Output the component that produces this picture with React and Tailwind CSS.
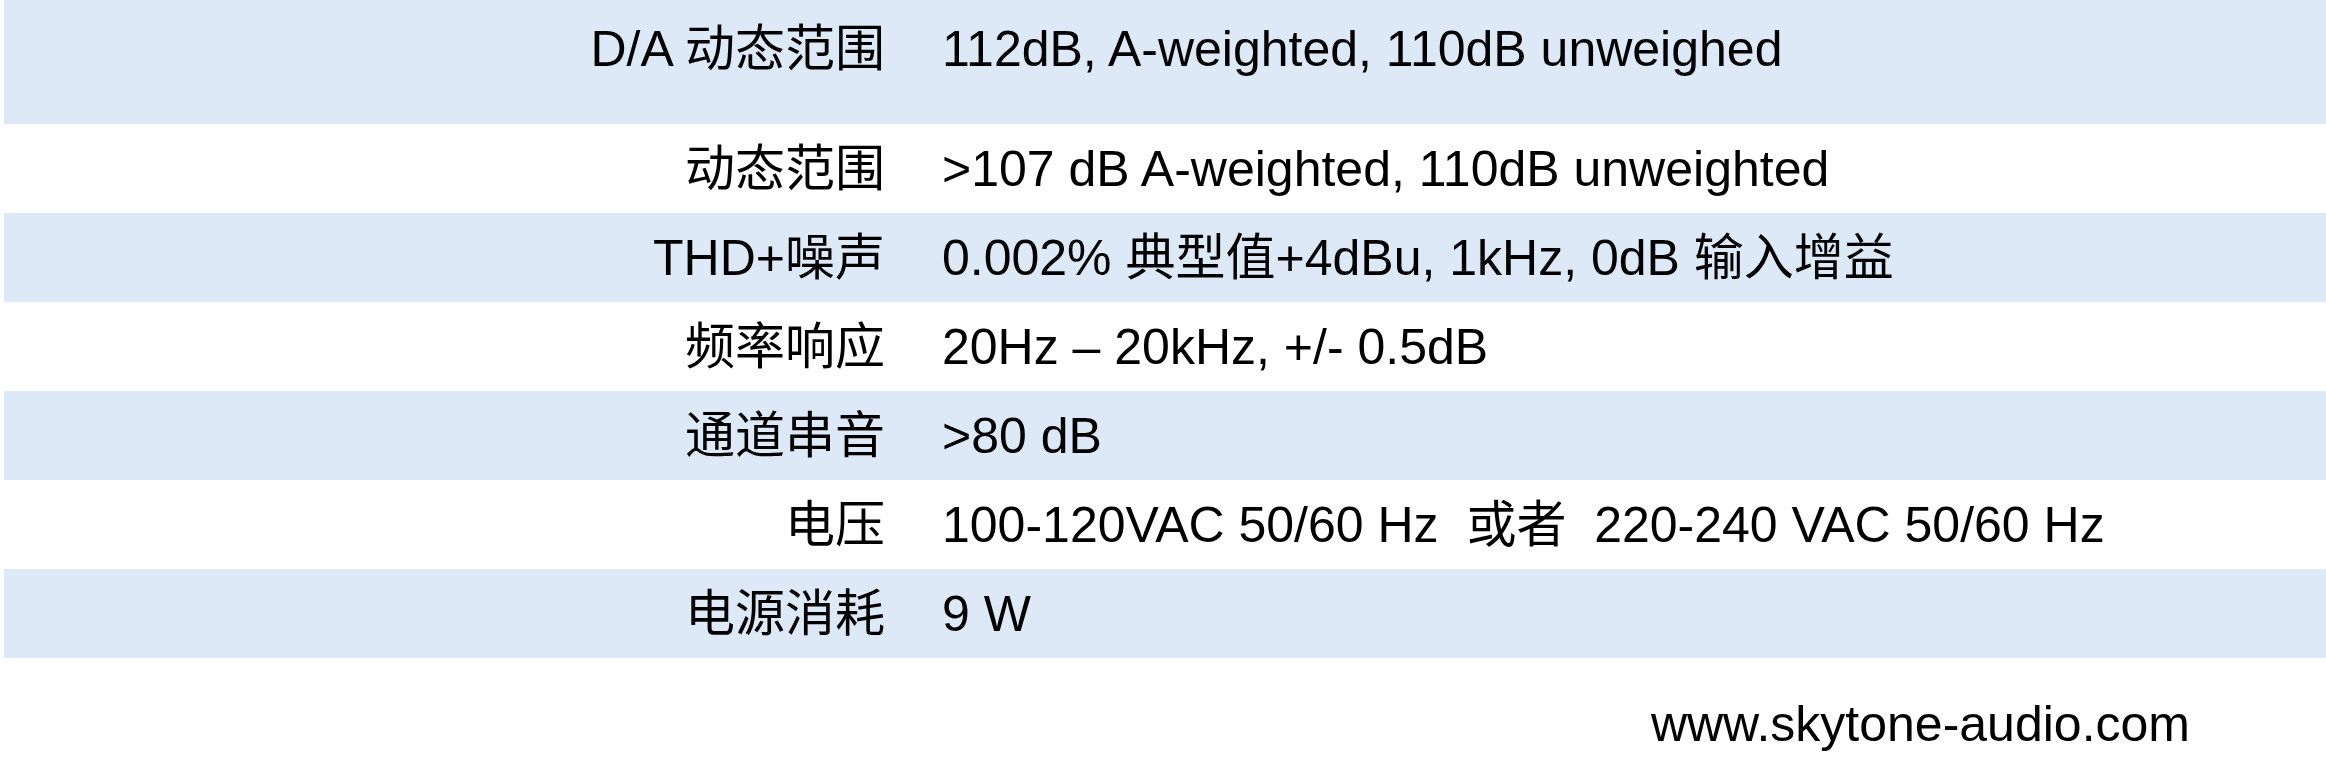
import React from 'react';

const specs = [
  { label: 'D/A 动态范围', value: '112dB, A-weighted, 110dB unweighed', tall: true },
  { label: '动态范围', value: '>107 dB A-weighted, 110dB unweighted' },
  { label: 'THD+噪声', value: '0.002% 典型值+4dBu, 1kHz, 0dB 输入增益' },
  { label: '频率响应', value: '20Hz – 20kHz, +/- 0.5dB' },
  { label: '通道串音', value: '>80 dB' },
  { label: '电压', value: '100-120VAC 50/60 Hz  或者  220-240 VAC 50/60 Hz' },
  { label: '电源消耗', value: '9 W' },
];

export default function App() {
  return (
    <div className="w-[2326px] h-[758px] bg-white text-black text-[50px] leading-none font-['Liberation_Sans','Noto_Sans_CJK_SC',sans-serif] overflow-hidden">
      {/* Spec table */}
      <div className="ml-1 flex flex-col">
        {specs.map((row, i) => (
          <div
            key={row.label}
            className={`flex ${i % 2 === 0 ? 'bg-[#dde9f6]' : 'bg-white'} ${row.tall ? 'h-[124px] items-start pt-[24px]' : 'h-[89px] items-center'}`}
          >
            <div className="w-[881px] shrink-0 text-right whitespace-pre">{row.label}</div>
            <div className="pl-[57px] whitespace-pre">{row.value}</div>
          </div>
        ))}
      </div>

      {/* Footer */}
      <div className="mt-[41px] pr-[136px] text-right">www.skytone-audio.com</div>
    </div>
  );
}
